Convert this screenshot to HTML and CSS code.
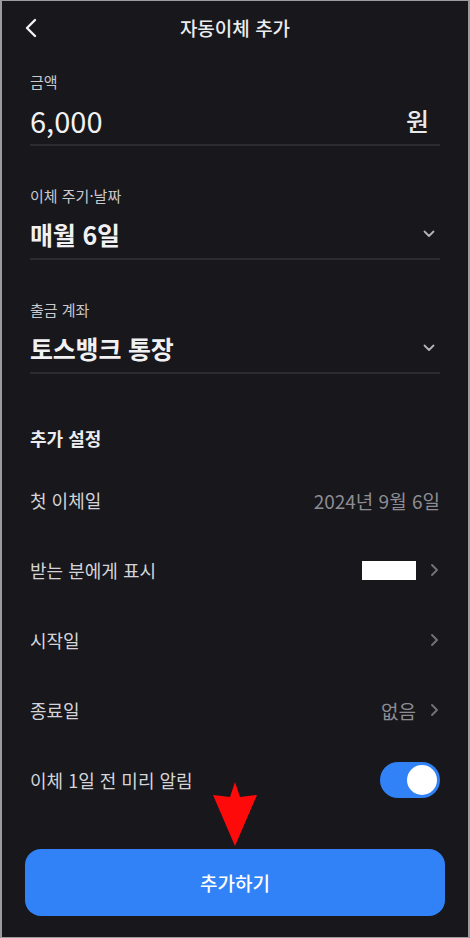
FILE: index.html
```html
<!DOCTYPE html>
<html lang="ko">
<head>
    <meta charset="UTF-8">
    <meta name="viewport" content="width=device-width, initial-scale=1.0">
    <title>자동이체 추가</title>
    <link rel="stylesheet" href="styles.css">
</head>
<body>

    <div class="screen">
        <header>
            <a class="back" href="#">
                <svg width="14" height="20" viewBox="0 0 14 20"><path d="M11 2 L3 10 L11 18" fill="none" stroke="#f2f2f4" stroke-width="2.4" stroke-linecap="round" stroke-linejoin="round"/></svg>
            </a>
            <h1>자동이체 추가</h1>
            <span></span>
        </header>

        <div class="field first">
            <div class="label">금액</div>
            <div class="value-row">
                <span class="amount">6,000</span>
                <span class="unit">원</span>
            </div>
        </div>

        <div class="field">
            <div class="label">이체 주기·날짜</div>
            <div class="value-row">
                <span class="big">매월 6일</span>
                <svg class="down" width="12" height="8" viewBox="0 0 12 8"><path d="M1.5 1.5 L6 6 L10.5 1.5" fill="none" stroke="#b4b4b9" stroke-width="1.8" stroke-linecap="round" stroke-linejoin="round"/></svg>
            </div>
        </div>

        <div class="field">
            <div class="label">출금 계좌</div>
            <div class="value-row">
                <span class="big">토스뱅크 통장</span>
                <svg class="down" width="12" height="8" viewBox="0 0 12 8"><path d="M1.5 1.5 L6 6 L10.5 1.5" fill="none" stroke="#b4b4b9" stroke-width="1.8" stroke-linecap="round" stroke-linejoin="round"/></svg>
            </div>
        </div>

        <h2>추가 설정</h2>

        <div class="rows">
            <div class="row">
                <span class="name">첫 이체일</span>
                <span class="val">2024년 9월 6일</span>
            </div>
            <div class="row">
                <span class="name">받는 분에게 표시</span>
                <span class="right">
                    <span class="masked"></span>
                    <svg class="more" width="9" height="14" viewBox="0 0 9 14"><path d="M2 2 L7 7 L2 12" fill="none" stroke="#707076" stroke-width="2" stroke-linecap="round" stroke-linejoin="round"/></svg>
                </span>
            </div>
            <div class="row">
                <span class="name">시작일</span>
                <span class="right">
                    <svg class="more" width="9" height="14" viewBox="0 0 9 14"><path d="M2 2 L7 7 L2 12" fill="none" stroke="#707076" stroke-width="2" stroke-linecap="round" stroke-linejoin="round"/></svg>
                </span>
            </div>
            <div class="row">
                <span class="name">종료일</span>
                <span class="right">
                    <span class="val">없음</span>
                    <svg class="more" width="9" height="14" viewBox="0 0 9 14"><path d="M2 2 L7 7 L2 12" fill="none" stroke="#707076" stroke-width="2" stroke-linecap="round" stroke-linejoin="round"/></svg>
                </span>
            </div>
            <div class="row">
                <span class="name">이체 1일 전 미리 알림</span>
                <span class="toggle on"><span class="knob"></span></span>
            </div>
        </div>

        <div class="bottom">
            <button>추가하기</button>
        </div>

        <!-- red pointer drawn over the screenshot -->
        <svg class="pointer" width="46" height="66" viewBox="0 0 46 66"><path d="M22 0 L27 15 L44 13 L22 64 L0 13 L17 15 Z" fill="#ff0a0a"/></svg>
    </div>

</body>
</html>
```

FILE: styles.css
```css
/* General */
body, html {
    margin: 0;
    padding: 0;
    background-color: #17171c;
}

.screen {
    position: relative;
    width: 470px;
    height: 938px;
    box-sizing: border-box;
    border: 1px solid #9c9c9c;
    border-left-width: 2px;
    border-right-width: 2px;
    background-color: #17171c;
    color: #e9e9ec;
    font-family: "Noto Sans CJK KR", "Noto Sans", sans-serif;
    display: flex;
    flex-direction: column;
}

/* Header */
header {
    height: 53px;
    display: grid;
    grid-template-columns: 1fr auto 1fr;
    align-items: center;
    padding: 0 22px;
}

header .back {
    display: flex;
    align-items: center;
}

header h1 {
    margin: 0;
    font-size: 19px;
    font-weight: 500;
    color: #ececef;
}

/* Input fields */
.field {
    margin: 40px 28px 0;
    border-bottom: 2px solid #2b2b31;
}

.field.first {
    margin-top: 18px;
}

.field .label {
    font-size: 15px;
    line-height: 20px;
    color: #c9c9cd;
}

.value-row {
    display: flex;
    justify-content: space-between;
    align-items: center;
    height: 36px;
    margin-top: 10px;
    padding-bottom: 6px;
}

.amount {
    font-size: 29px;
    font-weight: 400;
    color: #f1f1f3;
}

.unit {
    font-size: 25px;
    font-weight: 500;
    margin-right: 11px;
}

.big {
    font-size: 25px;
    font-weight: 700;
    letter-spacing: -0.2px;
    color: #f1f1f3;
}

.down {
    margin-right: 5px;
}

/* Extra settings */
h2 {
    margin: 51px 28px 0;
    font-size: 18px;
    line-height: 26px;
    font-weight: 700;
    color: #ececef;
}

.rows {
    margin: 14px 28px 0;
}

.row {
    height: 70px;
    display: flex;
    justify-content: space-between;
    align-items: center;
    font-size: 18px;
}

.row .name {
    color: #d4d4d8;
}

.row .val {
    font-size: 19px;
    color: #8d8d93;
}

.right {
    display: flex;
    align-items: center;
    gap: 14px;
}

.masked {
    width: 54px;
    height: 19px;
    background-color: #ffffff;
}

.more {
    margin-right: 1px;
}

/* Toggle */
.toggle {
    width: 60px;
    height: 36px;
    border-radius: 18px;
    background-color: #3182f6;
    position: relative;
}

.toggle .knob {
    position: absolute;
    top: 3px;
    right: 3px;
    width: 30px;
    height: 30px;
    border-radius: 50%;
    background-color: #ffffff;
}

/* Button */
.bottom {
    margin-top: auto;
    padding: 0 23px 21px;
}

button {
    width: 100%;
    height: 67px;
    border: none;
    border-radius: 16px;
    background-color: #3182f6;
    color: #ffffff;
    font-family: "Noto Sans CJK KR", sans-serif;
    font-size: 19px;
    font-weight: 500;
    cursor: pointer;
}

.pointer {
    position: absolute;
    left: 211px;
    top: 781px;
}
```
